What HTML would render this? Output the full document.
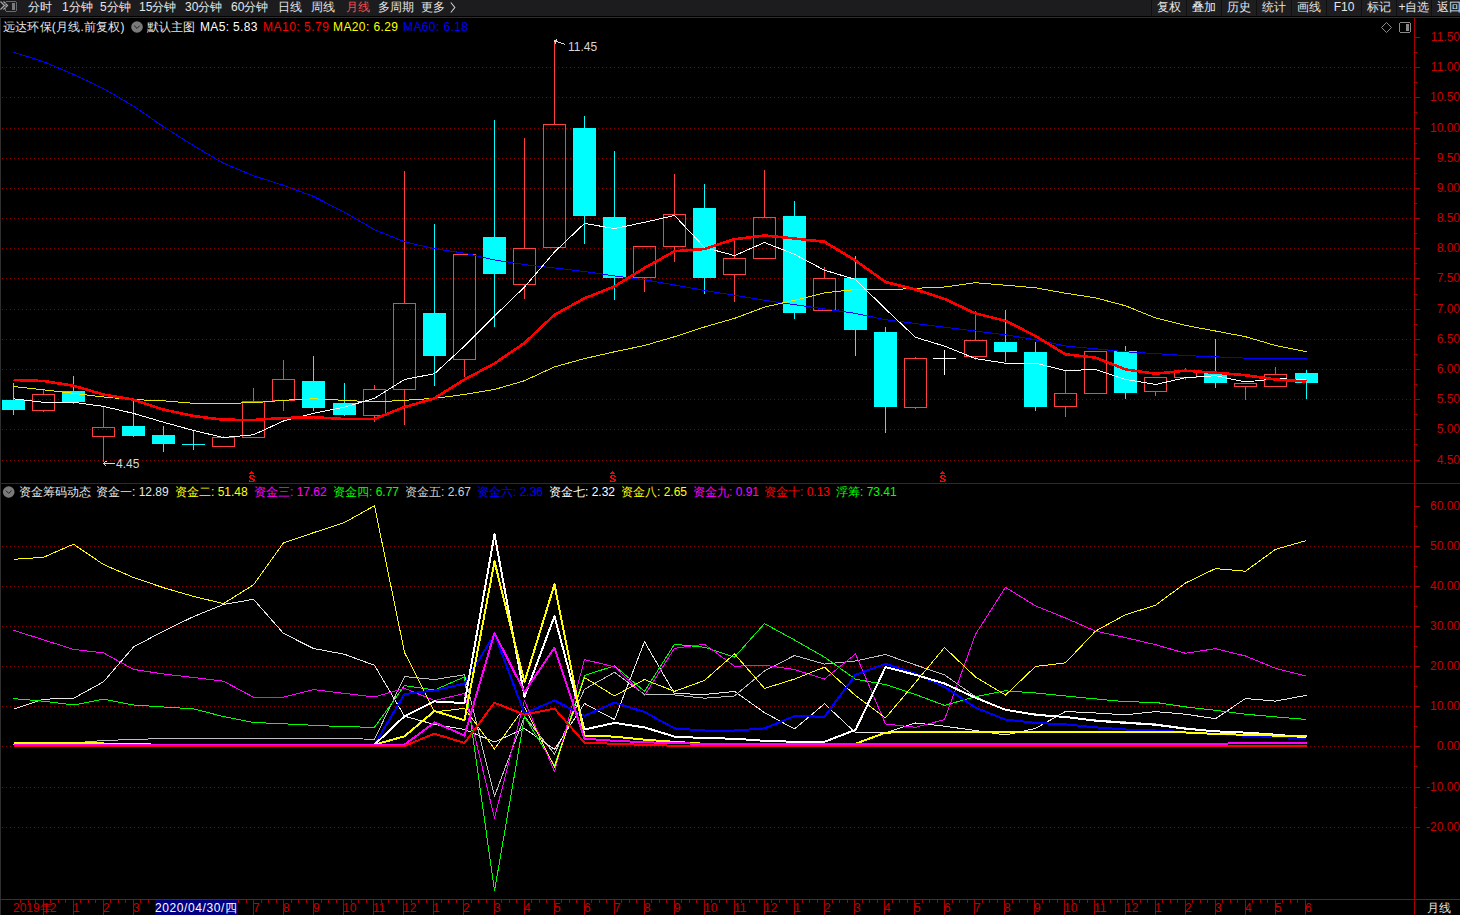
<!DOCTYPE html>
<html><head><meta charset="utf-8">
<style>
html,body{margin:0;padding:0;background:#000;width:1460px;height:915px;overflow:hidden;}
body{position:relative;font-family:"Liberation Sans",sans-serif;}
#tb{position:absolute;left:0;top:0;width:1460px;height:16px;background:#1c1c1e;}
#tl{position:absolute;left:0;top:17px;width:1460px;height:1px;background:#2e2e2e;}
#lb{position:absolute;left:0;top:17px;width:1px;height:898px;background:#2e2e2e;}
.t{position:absolute;white-space:nowrap;line-height:16px;}
.btn{position:absolute;top:0;width:34px;height:16px;background:#1e1e20;border-left:1px solid #101010;color:#e6e6e6;font-size:12px;line-height:15px;text-align:center;white-space:nowrap;}
.ra{position:absolute;right:0;width:44px;text-align:right;color:#c80000;font-size:12px;line-height:16px;}
.bl{position:absolute;top:901px;color:#c80000;font-size:12px;line-height:15px;white-space:nowrap;}
.hl{position:absolute;top:900px;left:155px;width:83px;height:15px;background:#000080;color:#fff;font-size:12px;line-height:16px;letter-spacing:0.6px;white-space:nowrap;}
svg{position:absolute;left:0;top:0;}
</style></head><body>
<div id="tb"></div>
<div class="btn" style="left:1151px">复权</div><div class="btn" style="left:1186px">叠加</div><div class="btn" style="left:1221px">历史</div><div class="btn" style="left:1256px">统计</div><div class="btn" style="left:1291px">画线</div><div class="btn" style="left:1326px">F10</div><div class="btn" style="left:1361px">标记</div><div class="btn" style="left:1396px">+自选</div><div class="btn" style="left:1431px">返回</div>
<div id="tl"></div>
<div id="lb"></div>
<svg width="1460" height="915" viewBox="0 0 1460 915" shape-rendering="crispEdges">
<line x1="2" y1="67.5" x2="1412" y2="67.5" stroke="#8a0000" stroke-width="1" stroke-dasharray="1 3"/>
<line x1="2" y1="97.5" x2="1412" y2="97.5" stroke="#8a0000" stroke-width="1" stroke-dasharray="1 3"/>
<line x1="2" y1="128.5" x2="1412" y2="128.5" stroke="#8a0000" stroke-width="1" stroke-dasharray="1 3"/>
<line x1="2" y1="158.5" x2="1412" y2="158.5" stroke="#8a0000" stroke-width="1" stroke-dasharray="1 3"/>
<line x1="2" y1="188.5" x2="1412" y2="188.5" stroke="#8a0000" stroke-width="1" stroke-dasharray="1 3"/>
<line x1="2" y1="218.5" x2="1412" y2="218.5" stroke="#8a0000" stroke-width="1" stroke-dasharray="1 3"/>
<line x1="2" y1="248.5" x2="1412" y2="248.5" stroke="#8a0000" stroke-width="1" stroke-dasharray="1 3"/>
<line x1="2" y1="278.5" x2="1412" y2="278.5" stroke="#8a0000" stroke-width="1" stroke-dasharray="1 3"/>
<line x1="2" y1="309.5" x2="1412" y2="309.5" stroke="#8a0000" stroke-width="1" stroke-dasharray="1 3"/>
<line x1="2" y1="339.5" x2="1412" y2="339.5" stroke="#8a0000" stroke-width="1" stroke-dasharray="1 3"/>
<line x1="2" y1="369.5" x2="1412" y2="369.5" stroke="#8a0000" stroke-width="1" stroke-dasharray="1 3"/>
<line x1="2" y1="399.5" x2="1412" y2="399.5" stroke="#8a0000" stroke-width="1" stroke-dasharray="1 3"/>
<line x1="2" y1="429.5" x2="1412" y2="429.5" stroke="#8a0000" stroke-width="1" stroke-dasharray="1 3"/>
<line x1="2" y1="460.5" x2="1412" y2="460.5" stroke="#8a0000" stroke-width="1" stroke-dasharray="1 3"/>
<line x1="2" y1="546.5" x2="1412" y2="546.5" stroke="#8a0000" stroke-width="1" stroke-dasharray="1 3"/>
<line x1="2" y1="586.5" x2="1412" y2="586.5" stroke="#8a0000" stroke-width="1" stroke-dasharray="1 3"/>
<line x1="2" y1="626.5" x2="1412" y2="626.5" stroke="#8a0000" stroke-width="1" stroke-dasharray="1 3"/>
<line x1="2" y1="666.5" x2="1412" y2="666.5" stroke="#8a0000" stroke-width="1" stroke-dasharray="1 3"/>
<line x1="2" y1="706.5" x2="1412" y2="706.5" stroke="#8a0000" stroke-width="1" stroke-dasharray="1 3"/>
<line x1="2" y1="746.5" x2="1412" y2="746.5" stroke="#8a0000" stroke-width="1" stroke-dasharray="1 3"/>
<line x1="2" y1="787.5" x2="1412" y2="787.5" stroke="#8a0000" stroke-width="1" stroke-dasharray="1 3"/>
<line x1="2" y1="827.5" x2="1412" y2="827.5" stroke="#8a0000" stroke-width="1" stroke-dasharray="1 3"/>
<rect x="2" y="400" width="23" height="10" fill="#00ffff"/>
<rect x="13" y="383" width="1" height="17" fill="#00ffff"/>
<rect x="13" y="410" width="1" height="5" fill="#00ffff"/>
<rect x="32.5" y="394.5" width="22" height="16" fill="none" stroke="#ff4040" stroke-width="1"/>
<rect x="43" y="389" width="1" height="5" fill="#ff4040"/>
<rect x="43" y="411" width="1" height="1" fill="#ff4040"/>
<rect x="62" y="391" width="23" height="11" fill="#00ffff"/>
<rect x="73" y="376" width="1" height="15" fill="#00ffff"/>
<rect x="73" y="402" width="1" height="2" fill="#00ffff"/>
<rect x="92.5" y="427.5" width="22" height="9" fill="none" stroke="#ff4040" stroke-width="1"/>
<rect x="103" y="407" width="1" height="20" fill="#ff4040"/>
<rect x="103" y="437" width="1" height="25" fill="#ff4040"/>
<rect x="122" y="426" width="23" height="10" fill="#00ffff"/>
<rect x="133" y="400" width="1" height="26" fill="#00ffff"/>
<rect x="133" y="436" width="1" height="1" fill="#00ffff"/>
<rect x="152" y="435" width="23" height="9" fill="#00ffff"/>
<rect x="163" y="426" width="1" height="9" fill="#00ffff"/>
<rect x="163" y="444" width="1" height="8" fill="#00ffff"/>
<rect x="182" y="444" width="23" height="1" fill="#00ffff"/>
<rect x="193" y="431" width="1" height="19" fill="#00ffff"/>
<rect x="212.5" y="437.5" width="22" height="9" fill="none" stroke="#ff4040" stroke-width="1"/>
<rect x="223" y="436" width="1" height="1" fill="#ff4040"/>
<rect x="242.5" y="401.5" width="22" height="36" fill="none" stroke="#ff4040" stroke-width="1"/>
<rect x="253" y="388" width="1" height="13" fill="#ff4040"/>
<rect x="272.5" y="379.5" width="22" height="21" fill="none" stroke="#ff4040" stroke-width="1"/>
<rect x="283" y="360" width="1" height="19" fill="#ff4040"/>
<rect x="283" y="401" width="1" height="10" fill="#ff4040"/>
<rect x="302" y="381" width="23" height="27" fill="#00ffff"/>
<rect x="313" y="356" width="1" height="25" fill="#00ffff"/>
<rect x="313" y="408" width="1" height="3" fill="#00ffff"/>
<rect x="333" y="403" width="23" height="12" fill="#00ffff"/>
<rect x="344" y="383" width="1" height="20" fill="#00ffff"/>
<rect x="344" y="415" width="1" height="1" fill="#00ffff"/>
<rect x="363.5" y="389.5" width="22" height="26" fill="none" stroke="#ff4040" stroke-width="1"/>
<rect x="374" y="385" width="1" height="4" fill="#ff4040"/>
<rect x="374" y="416" width="1" height="6" fill="#ff4040"/>
<rect x="393.5" y="303.5" width="22" height="86" fill="none" stroke="#ff4040" stroke-width="1"/>
<rect x="404" y="171" width="1" height="132" fill="#ff4040"/>
<rect x="404" y="390" width="1" height="35" fill="#ff4040"/>
<rect x="423" y="313" width="23" height="43" fill="#00ffff"/>
<rect x="434" y="224" width="1" height="89" fill="#00ffff"/>
<rect x="434" y="356" width="1" height="30" fill="#00ffff"/>
<rect x="453.5" y="254.5" width="22" height="105" fill="none" stroke="#ff4040" stroke-width="1"/>
<rect x="464" y="360" width="1" height="17" fill="#ff4040"/>
<rect x="483" y="237" width="23" height="37" fill="#00ffff"/>
<rect x="494" y="120" width="1" height="117" fill="#00ffff"/>
<rect x="494" y="274" width="1" height="53" fill="#00ffff"/>
<rect x="513.5" y="248.5" width="22" height="36" fill="none" stroke="#ff4040" stroke-width="1"/>
<rect x="524" y="138" width="1" height="110" fill="#ff4040"/>
<rect x="524" y="285" width="1" height="14" fill="#ff4040"/>
<rect x="543.5" y="124.5" width="22" height="123" fill="none" stroke="#ff4040" stroke-width="1"/>
<rect x="554" y="41" width="1" height="83" fill="#ff4040"/>
<rect x="573" y="128" width="23" height="88" fill="#00ffff"/>
<rect x="584" y="116" width="1" height="12" fill="#00ffff"/>
<rect x="584" y="216" width="1" height="28" fill="#00ffff"/>
<rect x="603" y="217" width="23" height="61" fill="#00ffff"/>
<rect x="614" y="151" width="1" height="66" fill="#00ffff"/>
<rect x="614" y="278" width="1" height="22" fill="#00ffff"/>
<rect x="633.5" y="246.5" width="22" height="31" fill="none" stroke="#ff4040" stroke-width="1"/>
<rect x="644" y="278" width="1" height="14" fill="#ff4040"/>
<rect x="663.5" y="214.5" width="22" height="32" fill="none" stroke="#ff4040" stroke-width="1"/>
<rect x="674" y="174" width="1" height="40" fill="#ff4040"/>
<rect x="674" y="247" width="1" height="15" fill="#ff4040"/>
<rect x="693" y="208" width="23" height="70" fill="#00ffff"/>
<rect x="704" y="184" width="1" height="24" fill="#00ffff"/>
<rect x="704" y="278" width="1" height="16" fill="#00ffff"/>
<rect x="723.5" y="258.5" width="22" height="16" fill="none" stroke="#ff4040" stroke-width="1"/>
<rect x="734" y="240" width="1" height="18" fill="#ff4040"/>
<rect x="734" y="275" width="1" height="27" fill="#ff4040"/>
<rect x="753.5" y="217.5" width="22" height="41" fill="none" stroke="#ff4040" stroke-width="1"/>
<rect x="764" y="170" width="1" height="47" fill="#ff4040"/>
<rect x="783" y="216" width="23" height="97" fill="#00ffff"/>
<rect x="794" y="201" width="1" height="15" fill="#00ffff"/>
<rect x="794" y="313" width="1" height="6" fill="#00ffff"/>
<rect x="813.5" y="278.5" width="22" height="32" fill="none" stroke="#ff4040" stroke-width="1"/>
<rect x="824" y="267" width="1" height="11" fill="#ff4040"/>
<rect x="844" y="278" width="23" height="52" fill="#00ffff"/>
<rect x="855" y="256" width="1" height="22" fill="#00ffff"/>
<rect x="855" y="330" width="1" height="26" fill="#00ffff"/>
<rect x="874" y="332" width="23" height="75" fill="#00ffff"/>
<rect x="885" y="327" width="1" height="5" fill="#00ffff"/>
<rect x="885" y="407" width="1" height="26" fill="#00ffff"/>
<rect x="904.5" y="358.5" width="22" height="49" fill="none" stroke="#ff4040" stroke-width="1"/>
<rect x="915" y="357" width="1" height="1" fill="#ff4040"/>
<rect x="915" y="408" width="1" height="1" fill="#ff4040"/>
<rect x="933" y="358" width="23" height="1" fill="#ffffff"/>
<rect x="944" y="350" width="1" height="25" fill="#ffffff"/>
<rect x="964.5" y="340.5" width="22" height="16" fill="none" stroke="#ff4040" stroke-width="1"/>
<rect x="975" y="311" width="1" height="29" fill="#ff4040"/>
<rect x="975" y="357" width="1" height="3" fill="#ff4040"/>
<rect x="994" y="342" width="23" height="10" fill="#00ffff"/>
<rect x="1005" y="310" width="1" height="32" fill="#00ffff"/>
<rect x="1005" y="352" width="1" height="10" fill="#00ffff"/>
<rect x="1024" y="352" width="23" height="55" fill="#00ffff"/>
<rect x="1035" y="342" width="1" height="10" fill="#00ffff"/>
<rect x="1035" y="407" width="1" height="4" fill="#00ffff"/>
<rect x="1054.5" y="393.5" width="22" height="13" fill="none" stroke="#ff4040" stroke-width="1"/>
<rect x="1065" y="370" width="1" height="23" fill="#ff4040"/>
<rect x="1065" y="407" width="1" height="10" fill="#ff4040"/>
<rect x="1084.5" y="351.5" width="22" height="42" fill="none" stroke="#ff4040" stroke-width="1"/>
<rect x="1114" y="351" width="23" height="42" fill="#00ffff"/>
<rect x="1125" y="346" width="1" height="5" fill="#00ffff"/>
<rect x="1125" y="393" width="1" height="6" fill="#00ffff"/>
<rect x="1144.5" y="377.5" width="22" height="14" fill="none" stroke="#ff4040" stroke-width="1"/>
<rect x="1155" y="392" width="1" height="4" fill="#ff4040"/>
<rect x="1174.5" y="371.5" width="22" height="6" fill="none" stroke="#ff4040" stroke-width="1"/>
<rect x="1185" y="368" width="1" height="3" fill="#ff4040"/>
<rect x="1185" y="378" width="1" height="2" fill="#ff4040"/>
<rect x="1204" y="372" width="23" height="11" fill="#00ffff"/>
<rect x="1215" y="339" width="1" height="33" fill="#00ffff"/>
<rect x="1215" y="383" width="1" height="5" fill="#00ffff"/>
<rect x="1234.5" y="383.5" width="22" height="3" fill="none" stroke="#ff4040" stroke-width="1"/>
<rect x="1245" y="387" width="1" height="13" fill="#ff4040"/>
<rect x="1264.5" y="374.5" width="22" height="12" fill="none" stroke="#ff4040" stroke-width="1"/>
<rect x="1275" y="367" width="1" height="7" fill="#ff4040"/>
<rect x="1295" y="373" width="23" height="10" fill="#00ffff"/>
<rect x="1306" y="370" width="1" height="3" fill="#00ffff"/>
<rect x="1306" y="383" width="1" height="16" fill="#00ffff"/>
<polyline points="13.5,52.2 43.5,61.7 73.5,74.4 103.5,88.6 133.5,106.1 163.5,126.7 193.5,145.7 223.5,163.2 253.5,175.8 283.5,185.3 313.5,196.4 344.5,212.3 374.5,229.7 404.5,241.8 434.5,248.7 464.5,253.2 494.5,260.0 524.5,264.6 554.5,267.9 584.5,271.5 614.5,275.9 644.5,279.8 674.5,285.0 704.5,290.4 734.5,295.3 764.5,300.3 794.5,304.6 824.5,308.9 855.5,313.4 885.5,319.7 915.5,323.5 944.5,327.2 975.5,331.0 1005.5,334.8 1035.5,339.8 1065.5,346.0 1095.5,348.8 1125.5,351.8 1155.5,353.6 1185.5,355.6 1215.5,356.8 1245.5,358.1 1275.5,358.6 1306.5,358.6" fill="none" stroke="#0000ff" stroke-width="1" stroke-linejoin="round" />
<polyline points="13.5,386.5 43.5,389.8 73.5,393.3 103.5,397.0 133.5,399.6 163.5,400.8 193.5,403.3 223.5,403.3 253.5,402.8 283.5,400.3 313.5,398.8 344.5,400.3 374.5,402.0 404.5,400.3 434.5,398.3 464.5,394.5 494.5,389.5 524.5,380.7 554.5,366.9 584.5,358.6 614.5,351.8 644.5,345.5 674.5,336.7 704.5,327.0 734.5,318.4 764.5,307.1 794.5,300.3 824.5,292.8 855.5,289.5 885.5,290.0 915.5,288.3 944.5,287.0 975.5,282.7 1005.5,285.2 1035.5,287.8 1065.5,293.2 1095.5,297.8 1125.5,305.8 1155.5,317.9 1185.5,325.4 1215.5,331.0 1245.5,336.7 1275.5,345.5 1306.5,351.8" fill="none" stroke="#e8e800" stroke-width="1" stroke-linejoin="round" />
<polyline points="13.5,398.8 43.5,402.3 73.5,402.3 103.5,406.4 133.5,413.4 163.5,422.2 193.5,430.5 223.5,437.5 253.5,434.8 283.5,421.0 313.5,413.4 344.5,407.1 374.5,398.3 404.5,379.5 434.5,373.7 464.5,346.0 494.5,316.0 524.5,287.0 554.5,252.0 584.5,223.4 614.5,228.6 644.5,222.3 674.5,215.5 704.5,247.5 734.5,255.6 764.5,242.5 794.5,254.3 824.5,270.2 855.5,279.5 885.5,309.0 915.5,337.3 944.5,346.1 975.5,358.6 1005.5,363.2 1035.5,363.2 1065.5,370.7 1095.5,369.4 1125.5,379.5 1155.5,384.5 1185.5,377.7 1215.5,375.7 1245.5,382.0 1275.5,378.7 1306.5,379.5" fill="none" stroke="#ffffff" stroke-width="1" stroke-linejoin="round" />
<polyline points="13.5,380.0 43.5,381.0 73.5,385.7 103.5,394.5 133.5,399.6 163.5,409.6 193.5,416.0 223.5,419.7 253.5,420.0 283.5,418.0 313.5,417.2 344.5,419.0 374.5,419.0 404.5,407.1 434.5,398.3 464.5,379.5 494.5,363.5 524.5,343.0 554.5,314.8 584.5,298.3 614.5,286.4 644.5,268.0 674.5,251.2 704.5,249.0 734.5,239.2 764.5,235.5 794.5,238.5 824.5,241.8 855.5,260.6 885.5,282.0 915.5,289.5 944.5,299.0 975.5,313.4 1005.5,320.9 1035.5,336.0 1065.5,354.3 1095.5,357.6 1125.5,369.4 1155.5,373.7 1185.5,370.7 1215.5,372.7 1245.5,375.2 1275.5,379.5 1306.5,381.5" fill="none" stroke="#ff0000" stroke-width="2.6" stroke-linejoin="round" />
<polyline points="13.5,745.0 43.5,744.0 73.5,743.0 103.5,740.5 133.5,739.5 163.5,738.5 193.5,738.5 223.5,738.5 253.5,738.5 283.5,738.5 313.5,738.5 344.5,738.5 374.5,739.3 404.5,676.6 434.5,679.5 464.5,674.8 494.5,796.2 524.5,716.5 554.5,754.0 584.5,689.3 614.5,672.3 644.5,694.5 674.5,695.0 704.5,698.2 734.5,696.0 764.5,670.9 794.5,655.5 824.5,664.1 855.5,661.0 885.5,654.5 915.5,665.0 944.5,674.8 975.5,696.7 1005.5,709.8 1035.5,714.0 1065.5,717.0 1095.5,720.0 1125.5,722.0 1155.5,724.0 1185.5,728.0 1215.5,731.0 1245.5,732.6 1275.5,734.7 1306.5,736.0" fill="none" stroke="#c0c0c0" stroke-width="1" stroke-linejoin="round" />
<polyline points="13.5,709.3 43.5,699.2 73.5,698.3 103.5,681.8 133.5,647.0 163.5,631.1 193.5,616.6 223.5,604.5 253.5,599.3 283.5,633.4 313.5,648.5 344.5,654.3 374.5,665.3 404.5,716.2 434.5,724.5 464.5,729.4 494.5,742.0 524.5,728.5 554.5,749.4 584.5,703.5 614.5,719.6 644.5,641.7 674.5,693.5 704.5,694.5 734.5,691.4 764.5,712.6 794.5,729.0 824.5,703.8 855.5,732.7 885.5,732.7 915.5,723.0 944.5,726.2 975.5,730.5 1005.5,735.0 1035.5,728.4 1065.5,711.5 1095.5,713.0 1125.5,714.8 1155.5,711.6 1185.5,714.2 1215.5,718.7 1245.5,698.5 1275.5,701.1 1306.5,695.3" fill="none" stroke="#e8e8e8" stroke-width="1" stroke-linejoin="round" />
<polyline points="13.5,698.6 43.5,701.2 73.5,705.0 103.5,699.2 133.5,705.0 163.5,707.0 193.5,708.8 223.5,716.6 253.5,722.4 283.5,723.8 313.5,725.3 344.5,726.7 374.5,727.3 404.5,685.6 434.5,690.0 464.5,676.9 494.5,890.9 524.5,716.5 554.5,765.5 584.5,675.5 614.5,665.8 644.5,691.4 674.5,644.2 704.5,647.3 734.5,657.1 764.5,623.6 794.5,640.0 824.5,657.1 855.5,679.2 885.5,684.6 915.5,694.5 944.5,705.4 975.5,696.7 1005.5,690.8 1035.5,693.0 1065.5,696.0 1095.5,698.9 1125.5,701.7 1155.5,702.4 1185.5,706.9 1215.5,710.3 1245.5,714.2 1275.5,716.9 1306.5,719.5" fill="none" stroke="#00ff00" stroke-width="1" stroke-linejoin="round" />
<polyline points="13.5,630.3 43.5,639.8 73.5,649.4 103.5,652.9 133.5,669.4 163.5,674.0 193.5,677.5 223.5,681.2 253.5,697.2 283.5,697.2 313.5,689.6 344.5,693.4 374.5,697.0 404.5,688.3 434.5,700.5 464.5,693.5 494.5,818.2 524.5,700.5 554.5,771.6 584.5,659.6 614.5,666.8 644.5,695.5 674.5,648.3 704.5,644.2 734.5,666.2 764.5,665.3 794.5,669.5 824.5,679.1 855.5,654.0 885.5,724.0 915.5,727.3 944.5,719.6 975.5,634.3 1005.5,587.3 1035.5,605.9 1065.5,618.0 1095.5,631.1 1125.5,637.6 1155.5,644.7 1185.5,653.3 1215.5,648.6 1245.5,656.0 1275.5,668.3 1306.5,676.2" fill="none" stroke="#ff00ff" stroke-width="1" stroke-linejoin="round" />
<polyline points="13.5,559.3 43.5,557.3 73.5,544.2 103.5,564.5 133.5,577.5 163.5,587.7 193.5,596.4 223.5,603.6 253.5,584.8 283.5,542.8 313.5,532.7 344.5,522.5 374.5,505.7 404.5,652.4 434.5,711.9 464.5,708.4 494.5,749.0 524.5,707.3 554.5,767.0 584.5,677.5 614.5,696.0 644.5,679.5 674.5,691.4 704.5,680.5 734.5,653.8 764.5,688.4 794.5,679.1 824.5,667.2 855.5,695.6 885.5,717.9 915.5,682.4 944.5,647.5 975.5,677.0 1005.5,695.1 1035.5,666.5 1065.5,662.8 1095.5,631.1 1125.5,614.7 1155.5,605.3 1185.5,583.0 1215.5,568.6 1245.5,571.2 1275.5,549.4 1306.5,540.5" fill="none" stroke="#ffff00" stroke-width="1" stroke-linejoin="round" />
<polyline points="13.5,745.5 43.5,745.5 73.5,745.5 103.5,745.5 133.5,745.5 163.5,745.5 193.5,745.5 223.5,745.5 253.5,745.5 283.5,745.5 313.5,745.5 344.5,745.5 374.5,744.7 404.5,694.0 434.5,690.5 464.5,683.6 494.5,634.1 524.5,713.5 554.5,700.5 584.5,715.8 614.5,702.7 644.5,712.0 674.5,728.4 704.5,730.5 734.5,730.5 764.5,728.4 794.5,716.1 824.5,716.7 855.5,674.8 885.5,663.9 915.5,673.7 944.5,686.8 975.5,707.6 1005.5,719.6 1035.5,722.9 1065.5,724.4 1095.5,727.3 1125.5,729.5 1155.5,730.5 1185.5,732.1 1215.5,733.9 1245.5,735.7 1275.5,737.3 1306.5,737.8" fill="none" stroke="#0000ff" stroke-width="2" stroke-linejoin="round" />
<polyline points="13.5,745.5 43.5,745.5 73.5,745.5 103.5,745.5 133.5,745.5 163.5,745.5 193.5,745.5 223.5,745.5 253.5,745.5 283.5,745.5 313.5,745.5 344.5,745.5 374.5,744.7 404.5,716.2 434.5,701.4 464.5,703.1 494.5,534.5 524.5,696.6 554.5,616.3 584.5,729.5 614.5,722.9 644.5,727.4 674.5,736.6 704.5,738.1 734.5,738.7 764.5,740.8 794.5,741.8 824.5,741.8 855.5,729.9 885.5,667.1 915.5,674.8 944.5,683.5 975.5,697.8 1005.5,709.8 1035.5,714.8 1065.5,717.0 1095.5,720.7 1125.5,722.9 1155.5,724.7 1185.5,728.7 1215.5,731.3 1245.5,732.6 1275.5,734.7 1306.5,737.3" fill="none" stroke="#ffffff" stroke-width="2" stroke-linejoin="round" />
<polyline points="13.5,743.0 43.5,743.0 73.5,743.0 103.5,743.5 133.5,743.8 163.5,745.0 193.5,745.0 223.5,745.0 253.5,745.0 283.5,745.0 313.5,745.0 344.5,745.0 374.5,744.7 404.5,736.3 434.5,711.0 464.5,720.3 494.5,561.5 524.5,682.1 554.5,584.4 584.5,735.7 614.5,736.6 644.5,739.7 674.5,741.8 704.5,743.8 734.5,743.8 764.5,743.8 794.5,743.8 824.5,743.8 855.5,743.7 885.5,732.7 915.5,731.6 944.5,731.6 975.5,731.6 1005.5,731.6 1035.5,731.6 1065.5,731.6 1095.5,731.6 1125.5,731.6 1155.5,731.6 1185.5,732.5 1215.5,733.9 1245.5,734.8 1275.5,735.6 1306.5,736.5" fill="none" stroke="#ffff00" stroke-width="2" stroke-linejoin="round" />
<polyline points="13.5,744.7 43.5,744.7 73.5,744.7 103.5,744.7 133.5,744.7 163.5,744.7 193.5,744.7 223.5,744.7 253.5,744.7 283.5,744.7 313.5,744.7 344.5,744.7 374.5,744.7 404.5,744.7 434.5,722.4 464.5,735.5 494.5,633.0 524.5,692.0 554.5,647.7 584.5,738.7 614.5,740.8 644.5,742.2 674.5,743.2 704.5,743.8 734.5,744.2 764.5,744.2 794.5,744.2 824.5,744.2 855.5,744.2 885.5,744.2 915.5,744.2 944.5,744.2 975.5,744.2 1005.5,744.2 1035.5,744.2 1065.5,744.2 1095.5,744.2 1125.5,744.2 1155.5,744.2 1185.5,744.2 1215.5,744.2 1245.5,742.6 1275.5,742.6 1306.5,742.6" fill="none" stroke="#ff00ff" stroke-width="2" stroke-linejoin="round" />
<polyline points="13.5,745.9 43.5,745.9 73.5,745.9 103.5,745.9 133.5,745.9 163.5,745.9 193.5,745.9 223.5,745.9 253.5,745.9 283.5,745.9 313.5,745.9 344.5,745.9 374.5,745.9 404.5,745.9 434.5,733.7 464.5,743.0 494.5,702.8 524.5,714.7 554.5,708.6 584.5,742.6 614.5,743.8 644.5,744.9 674.5,745.7 704.5,745.7 734.5,745.7 764.5,745.7 794.5,745.7 824.5,745.7 855.5,745.7 885.5,745.7 915.5,745.7 944.5,745.7 975.5,745.7 1005.5,745.7 1035.5,745.7 1065.5,745.7 1095.5,745.7 1125.5,745.7 1155.5,745.7 1185.5,745.7 1215.5,745.7 1245.5,745.7 1275.5,745.7 1306.5,745.7" fill="none" stroke="#ff0000" stroke-width="2" stroke-linejoin="round" />
<rect x="0" y="483" width="1460" height="1" fill="#900000"/>
<rect x="0" y="899" width="1460" height="1" fill="#b00000"/>
<rect x="1414" y="18" width="1.2" height="897" fill="#a80000"/>
<rect x="1414" y="37" width="6" height="1" fill="#a80000"/>
<rect x="1414" y="52" width="3" height="1" fill="#a80000"/>
<rect x="1414" y="67" width="6" height="1" fill="#a80000"/>
<rect x="1414" y="82" width="3" height="1" fill="#a80000"/>
<rect x="1414" y="97" width="6" height="1" fill="#a80000"/>
<rect x="1414" y="112" width="3" height="1" fill="#a80000"/>
<rect x="1414" y="128" width="6" height="1" fill="#a80000"/>
<rect x="1414" y="143" width="3" height="1" fill="#a80000"/>
<rect x="1414" y="158" width="6" height="1" fill="#a80000"/>
<rect x="1414" y="173" width="3" height="1" fill="#a80000"/>
<rect x="1414" y="188" width="6" height="1" fill="#a80000"/>
<rect x="1414" y="203" width="3" height="1" fill="#a80000"/>
<rect x="1414" y="218" width="6" height="1" fill="#a80000"/>
<rect x="1414" y="233" width="3" height="1" fill="#a80000"/>
<rect x="1414" y="248" width="6" height="1" fill="#a80000"/>
<rect x="1414" y="263" width="3" height="1" fill="#a80000"/>
<rect x="1414" y="278" width="6" height="1" fill="#a80000"/>
<rect x="1414" y="294" width="3" height="1" fill="#a80000"/>
<rect x="1414" y="309" width="6" height="1" fill="#a80000"/>
<rect x="1414" y="324" width="3" height="1" fill="#a80000"/>
<rect x="1414" y="339" width="6" height="1" fill="#a80000"/>
<rect x="1414" y="354" width="3" height="1" fill="#a80000"/>
<rect x="1414" y="369" width="6" height="1" fill="#a80000"/>
<rect x="1414" y="384" width="3" height="1" fill="#a80000"/>
<rect x="1414" y="399" width="6" height="1" fill="#a80000"/>
<rect x="1414" y="414" width="3" height="1" fill="#a80000"/>
<rect x="1414" y="429" width="6" height="1" fill="#a80000"/>
<rect x="1414" y="444" width="3" height="1" fill="#a80000"/>
<rect x="1414" y="460" width="6" height="1" fill="#a80000"/>
<rect x="1414" y="506" width="6" height="1" fill="#a80000"/>
<rect x="1414" y="526" width="3" height="1" fill="#a80000"/>
<rect x="1414" y="546" width="6" height="1" fill="#a80000"/>
<rect x="1414" y="566" width="3" height="1" fill="#a80000"/>
<rect x="1414" y="586" width="6" height="1" fill="#a80000"/>
<rect x="1414" y="606" width="3" height="1" fill="#a80000"/>
<rect x="1414" y="626" width="6" height="1" fill="#a80000"/>
<rect x="1414" y="646" width="3" height="1" fill="#a80000"/>
<rect x="1414" y="666" width="6" height="1" fill="#a80000"/>
<rect x="1414" y="686" width="3" height="1" fill="#a80000"/>
<rect x="1414" y="706" width="6" height="1" fill="#a80000"/>
<rect x="1414" y="726" width="3" height="1" fill="#a80000"/>
<rect x="1414" y="746" width="6" height="1" fill="#a80000"/>
<rect x="1414" y="766" width="3" height="1" fill="#a80000"/>
<rect x="1414" y="787" width="6" height="1" fill="#a80000"/>
<rect x="1414" y="807" width="3" height="1" fill="#a80000"/>
<rect x="1414" y="827" width="6" height="1" fill="#a80000"/>
<rect x="43" y="900" width="1" height="15" fill="#a80000"/>
<rect x="73" y="900" width="1" height="15" fill="#a80000"/>
<rect x="103" y="900" width="1" height="15" fill="#a80000"/>
<rect x="133" y="900" width="1" height="15" fill="#a80000"/>
<rect x="163" y="900" width="1" height="15" fill="#a80000"/>
<rect x="193" y="900" width="1" height="15" fill="#a80000"/>
<rect x="223" y="900" width="1" height="15" fill="#a80000"/>
<rect x="253" y="900" width="1" height="15" fill="#a80000"/>
<rect x="283" y="900" width="1" height="15" fill="#a80000"/>
<rect x="313" y="900" width="1" height="15" fill="#a80000"/>
<rect x="343" y="900" width="1" height="15" fill="#a80000"/>
<rect x="373" y="900" width="1" height="15" fill="#a80000"/>
<rect x="403" y="900" width="1" height="15" fill="#a80000"/>
<rect x="433" y="900" width="1" height="15" fill="#a80000"/>
<rect x="463" y="900" width="1" height="15" fill="#a80000"/>
<rect x="494" y="900" width="1" height="15" fill="#a80000"/>
<rect x="524" y="900" width="1" height="15" fill="#a80000"/>
<rect x="554" y="900" width="1" height="15" fill="#a80000"/>
<rect x="584" y="900" width="1" height="15" fill="#a80000"/>
<rect x="614" y="900" width="1" height="15" fill="#a80000"/>
<rect x="644" y="900" width="1" height="15" fill="#a80000"/>
<rect x="674" y="900" width="1" height="15" fill="#a80000"/>
<rect x="704" y="900" width="1" height="15" fill="#a80000"/>
<rect x="734" y="900" width="1" height="15" fill="#a80000"/>
<rect x="764" y="900" width="1" height="15" fill="#a80000"/>
<rect x="794" y="900" width="1" height="15" fill="#a80000"/>
<rect x="824" y="900" width="1" height="15" fill="#a80000"/>
<rect x="854" y="900" width="1" height="15" fill="#a80000"/>
<rect x="884" y="900" width="1" height="15" fill="#a80000"/>
<rect x="914" y="900" width="1" height="15" fill="#a80000"/>
<rect x="944" y="900" width="1" height="15" fill="#a80000"/>
<rect x="974" y="900" width="1" height="15" fill="#a80000"/>
<rect x="1004" y="900" width="1" height="15" fill="#a80000"/>
<rect x="1034" y="900" width="1" height="15" fill="#a80000"/>
<rect x="1064" y="900" width="1" height="15" fill="#a80000"/>
<rect x="1094" y="900" width="1" height="15" fill="#a80000"/>
<rect x="1125" y="900" width="1" height="15" fill="#a80000"/>
<rect x="1155" y="900" width="1" height="15" fill="#a80000"/>
<rect x="1185" y="900" width="1" height="15" fill="#a80000"/>
<rect x="1215" y="900" width="1" height="15" fill="#a80000"/>
<rect x="1245" y="900" width="1" height="15" fill="#a80000"/>
<rect x="1275" y="900" width="1" height="15" fill="#a80000"/>
<rect x="1305" y="900" width="1" height="15" fill="#a80000"/>
<rect x="20" y="900" width="1" height="3" fill="#a80000"/>
<rect x="28" y="900" width="1" height="3" fill="#a80000"/>
<rect x="35" y="900" width="1" height="3" fill="#a80000"/>
<rect x="50" y="900" width="1" height="3" fill="#a80000"/>
<rect x="58" y="900" width="1" height="3" fill="#a80000"/>
<rect x="65" y="900" width="1" height="3" fill="#a80000"/>
<rect x="80" y="900" width="1" height="3" fill="#a80000"/>
<rect x="88" y="900" width="1" height="3" fill="#a80000"/>
<rect x="95" y="900" width="1" height="3" fill="#a80000"/>
<rect x="110" y="900" width="1" height="3" fill="#a80000"/>
<rect x="118" y="900" width="1" height="3" fill="#a80000"/>
<rect x="125" y="900" width="1" height="3" fill="#a80000"/>
<rect x="140" y="900" width="1" height="3" fill="#a80000"/>
<rect x="148" y="900" width="1" height="3" fill="#a80000"/>
<rect x="155" y="900" width="1" height="3" fill="#a80000"/>
<rect x="170" y="900" width="1" height="3" fill="#a80000"/>
<rect x="178" y="900" width="1" height="3" fill="#a80000"/>
<rect x="185" y="900" width="1" height="3" fill="#a80000"/>
<rect x="201" y="900" width="1" height="3" fill="#a80000"/>
<rect x="208" y="900" width="1" height="3" fill="#a80000"/>
<rect x="216" y="900" width="1" height="3" fill="#a80000"/>
<rect x="231" y="900" width="1" height="3" fill="#a80000"/>
<rect x="238" y="900" width="1" height="3" fill="#a80000"/>
<rect x="246" y="900" width="1" height="3" fill="#a80000"/>
<rect x="261" y="900" width="1" height="3" fill="#a80000"/>
<rect x="268" y="900" width="1" height="3" fill="#a80000"/>
<rect x="276" y="900" width="1" height="3" fill="#a80000"/>
<rect x="291" y="900" width="1" height="3" fill="#a80000"/>
<rect x="298" y="900" width="1" height="3" fill="#a80000"/>
<rect x="306" y="900" width="1" height="3" fill="#a80000"/>
<rect x="321" y="900" width="1" height="3" fill="#a80000"/>
<rect x="328" y="900" width="1" height="3" fill="#a80000"/>
<rect x="336" y="900" width="1" height="3" fill="#a80000"/>
<rect x="351" y="900" width="1" height="3" fill="#a80000"/>
<rect x="358" y="900" width="1" height="3" fill="#a80000"/>
<rect x="366" y="900" width="1" height="3" fill="#a80000"/>
<rect x="381" y="900" width="1" height="3" fill="#a80000"/>
<rect x="388" y="900" width="1" height="3" fill="#a80000"/>
<rect x="396" y="900" width="1" height="3" fill="#a80000"/>
<rect x="411" y="900" width="1" height="3" fill="#a80000"/>
<rect x="418" y="900" width="1" height="3" fill="#a80000"/>
<rect x="426" y="900" width="1" height="3" fill="#a80000"/>
<rect x="441" y="900" width="1" height="3" fill="#a80000"/>
<rect x="448" y="900" width="1" height="3" fill="#a80000"/>
<rect x="456" y="900" width="1" height="3" fill="#a80000"/>
<rect x="471" y="900" width="1" height="3" fill="#a80000"/>
<rect x="478" y="900" width="1" height="3" fill="#a80000"/>
<rect x="486" y="900" width="1" height="3" fill="#a80000"/>
<rect x="501" y="900" width="1" height="3" fill="#a80000"/>
<rect x="509" y="900" width="1" height="3" fill="#a80000"/>
<rect x="516" y="900" width="1" height="3" fill="#a80000"/>
<rect x="531" y="900" width="1" height="3" fill="#a80000"/>
<rect x="539" y="900" width="1" height="3" fill="#a80000"/>
<rect x="546" y="900" width="1" height="3" fill="#a80000"/>
<rect x="561" y="900" width="1" height="3" fill="#a80000"/>
<rect x="569" y="900" width="1" height="3" fill="#a80000"/>
<rect x="576" y="900" width="1" height="3" fill="#a80000"/>
<rect x="591" y="900" width="1" height="3" fill="#a80000"/>
<rect x="599" y="900" width="1" height="3" fill="#a80000"/>
<rect x="606" y="900" width="1" height="3" fill="#a80000"/>
<rect x="621" y="900" width="1" height="3" fill="#a80000"/>
<rect x="629" y="900" width="1" height="3" fill="#a80000"/>
<rect x="636" y="900" width="1" height="3" fill="#a80000"/>
<rect x="651" y="900" width="1" height="3" fill="#a80000"/>
<rect x="659" y="900" width="1" height="3" fill="#a80000"/>
<rect x="666" y="900" width="1" height="3" fill="#a80000"/>
<rect x="681" y="900" width="1" height="3" fill="#a80000"/>
<rect x="689" y="900" width="1" height="3" fill="#a80000"/>
<rect x="696" y="900" width="1" height="3" fill="#a80000"/>
<rect x="711" y="900" width="1" height="3" fill="#a80000"/>
<rect x="719" y="900" width="1" height="3" fill="#a80000"/>
<rect x="726" y="900" width="1" height="3" fill="#a80000"/>
<rect x="741" y="900" width="1" height="3" fill="#a80000"/>
<rect x="749" y="900" width="1" height="3" fill="#a80000"/>
<rect x="756" y="900" width="1" height="3" fill="#a80000"/>
<rect x="771" y="900" width="1" height="3" fill="#a80000"/>
<rect x="779" y="900" width="1" height="3" fill="#a80000"/>
<rect x="786" y="900" width="1" height="3" fill="#a80000"/>
<rect x="802" y="900" width="1" height="3" fill="#a80000"/>
<rect x="809" y="900" width="1" height="3" fill="#a80000"/>
<rect x="817" y="900" width="1" height="3" fill="#a80000"/>
<rect x="832" y="900" width="1" height="3" fill="#a80000"/>
<rect x="839" y="900" width="1" height="3" fill="#a80000"/>
<rect x="847" y="900" width="1" height="3" fill="#a80000"/>
<rect x="862" y="900" width="1" height="3" fill="#a80000"/>
<rect x="869" y="900" width="1" height="3" fill="#a80000"/>
<rect x="877" y="900" width="1" height="3" fill="#a80000"/>
<rect x="892" y="900" width="1" height="3" fill="#a80000"/>
<rect x="899" y="900" width="1" height="3" fill="#a80000"/>
<rect x="907" y="900" width="1" height="3" fill="#a80000"/>
<rect x="922" y="900" width="1" height="3" fill="#a80000"/>
<rect x="929" y="900" width="1" height="3" fill="#a80000"/>
<rect x="937" y="900" width="1" height="3" fill="#a80000"/>
<rect x="952" y="900" width="1" height="3" fill="#a80000"/>
<rect x="959" y="900" width="1" height="3" fill="#a80000"/>
<rect x="967" y="900" width="1" height="3" fill="#a80000"/>
<rect x="982" y="900" width="1" height="3" fill="#a80000"/>
<rect x="989" y="900" width="1" height="3" fill="#a80000"/>
<rect x="997" y="900" width="1" height="3" fill="#a80000"/>
<rect x="1012" y="900" width="1" height="3" fill="#a80000"/>
<rect x="1019" y="900" width="1" height="3" fill="#a80000"/>
<rect x="1027" y="900" width="1" height="3" fill="#a80000"/>
<rect x="1042" y="900" width="1" height="3" fill="#a80000"/>
<rect x="1049" y="900" width="1" height="3" fill="#a80000"/>
<rect x="1057" y="900" width="1" height="3" fill="#a80000"/>
<rect x="1072" y="900" width="1" height="3" fill="#a80000"/>
<rect x="1079" y="900" width="1" height="3" fill="#a80000"/>
<rect x="1087" y="900" width="1" height="3" fill="#a80000"/>
<rect x="1102" y="900" width="1" height="3" fill="#a80000"/>
<rect x="1110" y="900" width="1" height="3" fill="#a80000"/>
<rect x="1117" y="900" width="1" height="3" fill="#a80000"/>
<rect x="1132" y="900" width="1" height="3" fill="#a80000"/>
<rect x="1140" y="900" width="1" height="3" fill="#a80000"/>
<rect x="1147" y="900" width="1" height="3" fill="#a80000"/>
<rect x="1162" y="900" width="1" height="3" fill="#a80000"/>
<rect x="1170" y="900" width="1" height="3" fill="#a80000"/>
<rect x="1177" y="900" width="1" height="3" fill="#a80000"/>
<rect x="1192" y="900" width="1" height="3" fill="#a80000"/>
<rect x="1200" y="900" width="1" height="3" fill="#a80000"/>
<rect x="1207" y="900" width="1" height="3" fill="#a80000"/>
<rect x="1222" y="900" width="1" height="3" fill="#a80000"/>
<rect x="1230" y="900" width="1" height="3" fill="#a80000"/>
<rect x="1237" y="900" width="1" height="3" fill="#a80000"/>
<rect x="1252" y="900" width="1" height="3" fill="#a80000"/>
<rect x="1260" y="900" width="1" height="3" fill="#a80000"/>
<rect x="1267" y="900" width="1" height="3" fill="#a80000"/>
<rect x="1282" y="900" width="1" height="3" fill="#a80000"/>
<rect x="1290" y="900" width="1" height="3" fill="#a80000"/>
<rect x="1297" y="900" width="1" height="3" fill="#a80000"/>
<rect x="251" y="471" width="1" height="1" fill="#ff0000"/><rect x="250" y="472" width="3" height="1" fill="#ff0000"/><rect x="249" y="473" width="5" height="1" fill="#ff0000"/><rect x="250" y="475" width="4" height="1" fill="#ff0000"/><rect x="249" y="476" width="2" height="1" fill="#ff0000"/><rect x="253" y="476" width="2" height="1" fill="#ff0000"/><rect x="249" y="477" width="2" height="1" fill="#ff0000"/><rect x="250" y="478" width="3" height="1" fill="#ff0000"/><rect x="252" y="479" width="3" height="1" fill="#ff0000"/><rect x="249" y="480" width="1" height="1" fill="#ff0000"/><rect x="253" y="480" width="2" height="1" fill="#ff0000"/><rect x="249" y="481" width="5" height="1" fill="#ff0000"/>
<rect x="612" y="471" width="1" height="1" fill="#ff0000"/><rect x="611" y="472" width="3" height="1" fill="#ff0000"/><rect x="610" y="473" width="5" height="1" fill="#ff0000"/><rect x="611" y="475" width="4" height="1" fill="#ff0000"/><rect x="610" y="476" width="2" height="1" fill="#ff0000"/><rect x="614" y="476" width="2" height="1" fill="#ff0000"/><rect x="610" y="477" width="2" height="1" fill="#ff0000"/><rect x="611" y="478" width="3" height="1" fill="#ff0000"/><rect x="613" y="479" width="3" height="1" fill="#ff0000"/><rect x="610" y="480" width="1" height="1" fill="#ff0000"/><rect x="614" y="480" width="2" height="1" fill="#ff0000"/><rect x="610" y="481" width="5" height="1" fill="#ff0000"/>
<rect x="942" y="471" width="1" height="1" fill="#ff0000"/><rect x="941" y="472" width="3" height="1" fill="#ff0000"/><rect x="940" y="473" width="5" height="1" fill="#ff0000"/><rect x="941" y="475" width="4" height="1" fill="#ff0000"/><rect x="940" y="476" width="2" height="1" fill="#ff0000"/><rect x="944" y="476" width="2" height="1" fill="#ff0000"/><rect x="940" y="477" width="2" height="1" fill="#ff0000"/><rect x="941" y="478" width="3" height="1" fill="#ff0000"/><rect x="943" y="479" width="3" height="1" fill="#ff0000"/><rect x="940" y="480" width="1" height="1" fill="#ff0000"/><rect x="944" y="480" width="2" height="1" fill="#ff0000"/><rect x="940" y="481" width="5" height="1" fill="#ff0000"/>
<polyline points="104,463 108,461 M" fill="none"/>
<path d="M103.5,463.5 L115,463.5 M103.5,463.5 L106.5,461 M103.5,463.5 L106.5,466.5" stroke="#d8d8d8" stroke-width="1" fill="none"/>
<path d="M554.5,41 L565.5,44.5 M554.5,41 L557.5,39.5 M554.5,41 L556.5,44.5" stroke="#d8d8d8" stroke-width="1" fill="none"/>
<path d="M1386.5,22.5 L1391.5,27.5 L1386.5,32.5 L1381.5,27.5 Z" fill="none" stroke="#8c8c8c" stroke-width="1" shape-rendering="auto"/>
<rect x="1399.5" y="22.5" width="11" height="10" rx="2" fill="none" stroke="#8a8a8a" stroke-width="1"/>
<rect x="1406" y="24" width="2.5" height="7" fill="#8a8a8a"/>
<path d="M450.8,2.5 L454.8,7.5 L450.8,12.5" stroke="#d0d0d0" stroke-width="1.1" fill="none" shape-rendering="auto"/>
<circle cx="137" cy="27" r="5.8" fill="#7a7a7a" shape-rendering="auto"/><path d="M134.2,25.6 L137,28.4 L139.8,25.6" stroke="#222" stroke-width="1" fill="none" shape-rendering="auto"/>
<circle cx="8.7" cy="492" r="5.8" fill="#7a7a7a" shape-rendering="auto"/><path d="M5.9,490.6 L8.7,493.4 L11.5,490.6" stroke="#222" stroke-width="1" fill="none" shape-rendering="auto"/>
<path d="M0.5,1.5 L4.5,5.5 L0.5,9.5 M3.5,1.5 L7.5,5.5 L3.5,9.5" stroke="#a8a8a8" stroke-width="1.2" fill="none" shape-rendering="auto"/>
<rect x="5.5" y="1.5" width="11" height="10" rx="2" fill="none" stroke="#6a6a6a" stroke-width="1"/>
<rect x="12" y="3" width="2.5" height="7" fill="#7a7a7a"/>
</svg>
<div class="t" style="left:28px;top:-1px;color:#e6e6e6;font-size:12px;">分时</div><div class="t" style="left:62px;top:-1px;color:#e6e6e6;font-size:12px;">1分钟</div><div class="t" style="left:100px;top:-1px;color:#e6e6e6;font-size:12px;">5分钟</div><div class="t" style="left:139px;top:-1px;color:#e6e6e6;font-size:12px;">15分钟</div><div class="t" style="left:185px;top:-1px;color:#e6e6e6;font-size:12px;">30分钟</div><div class="t" style="left:231px;top:-1px;color:#e6e6e6;font-size:12px;">60分钟</div><div class="t" style="left:278px;top:-1px;color:#e6e6e6;font-size:12px;">日线</div><div class="t" style="left:311px;top:-1px;color:#e6e6e6;font-size:12px;">周线</div><div class="t" style="left:346px;top:-1px;color:#ff4a4a;font-size:12px;">月线</div><div class="t" style="left:378px;top:-1px;color:#e6e6e6;font-size:12px;">多周期</div><div class="t" style="left:421px;top:-1px;color:#e6e6e6;font-size:12px;">更多</div><div class="t" style="left:3px;top:19px;color:#e6e6e6;font-size:12px;letter-spacing:0.2px">远达环保(月线.前复权)</div><div class="t" style="left:147px;top:19px;color:#e6e6e6;font-size:12px;">默认主图</div><div class="t" style="left:200px;top:19px;color:#ffffff;font-size:12px;letter-spacing:0.35px">MA5: 5.83</div><div class="t" style="left:263px;top:19px;color:#ff0000;font-size:12px;letter-spacing:0.5px">MA10: 5.79</div><div class="t" style="left:333px;top:19px;color:#ffff00;font-size:12px;letter-spacing:0.4px">MA20: 6.29</div><div class="t" style="left:403px;top:19px;color:#0000ff;font-size:12px;letter-spacing:0.4px">MA60: 6.18</div><div class="t" style="left:568px;top:39px;color:#d8d8d8;font-size:12px;">11.45</div><div class="t" style="left:116px;top:456px;color:#d8d8d8;font-size:12px;">4.45</div><div class="t" style="left:19px;top:484px;color:#e6e6e6;font-size:12px;">资金筹码动态</div><div class="t" style="left:96px;top:484px;color:#e6e6e6;font-size:12px;">资金一: 12.89</div><div class="t" style="left:175px;top:484px;color:#ffff00;font-size:12px;">资金二: 51.48</div><div class="t" style="left:254px;top:484px;color:#ff00ff;font-size:12px;">资金三: 17.62</div><div class="t" style="left:333px;top:484px;color:#00ff00;font-size:12px;">资金四: 6.77</div><div class="t" style="left:405px;top:484px;color:#d0d0d0;font-size:12px;">资金五: 2.67</div><div class="t" style="left:477px;top:484px;color:#0000ff;font-size:12px;">资金六: 2.36</div><div class="t" style="left:549px;top:484px;color:#ffffff;font-size:12px;">资金七: 2.32</div><div class="t" style="left:621px;top:484px;color:#ffff00;font-size:12px;">资金八: 2.65</div><div class="t" style="left:693px;top:484px;color:#ff00ff;font-size:12px;">资金九: 0.91</div><div class="t" style="left:764px;top:484px;color:#ff0000;font-size:12px;">资金十: 0.13</div><div class="t" style="left:836px;top:484px;color:#00ff00;font-size:12px;">浮筹: 73.41</div>
<div class="ra" style="top:29px">11.50</div><div class="ra" style="top:59px">11.00</div><div class="ra" style="top:89px">10.50</div><div class="ra" style="top:120px">10.00</div><div class="ra" style="top:150px">9.50</div><div class="ra" style="top:180px">9.00</div><div class="ra" style="top:210px">8.50</div><div class="ra" style="top:240px">8.00</div><div class="ra" style="top:270px">7.50</div><div class="ra" style="top:301px">7.00</div><div class="ra" style="top:331px">6.50</div><div class="ra" style="top:361px">6.00</div><div class="ra" style="top:391px">5.50</div><div class="ra" style="top:421px">5.00</div><div class="ra" style="top:452px">4.50</div><div class="ra" style="top:498px">60.00</div><div class="ra" style="top:538px">50.00</div><div class="ra" style="top:578px">40.00</div><div class="ra" style="top:618px">30.00</div><div class="ra" style="top:658px">20.00</div><div class="ra" style="top:698px">10.00</div><div class="ra" style="top:738px">0.00</div><div class="ra" style="top:779px">-10.00</div><div class="ra" style="top:819px">-20.00</div>
<div class="bl" style="left:13px">2019年</div><div class="bl" style="left:43px">12</div><div class="bl" style="left:73px">1</div><div class="bl" style="left:103px">2</div><div class="bl" style="left:133px">3</div><div class="bl" style="left:253px">7</div><div class="bl" style="left:283px">8</div><div class="bl" style="left:313px">9</div><div class="bl" style="left:343px">10</div><div class="bl" style="left:373px">11</div><div class="bl" style="left:403px">12</div><div class="bl" style="left:433px">1</div><div class="bl" style="left:463px">2</div><div class="bl" style="left:494px">3</div><div class="bl" style="left:524px">4</div><div class="bl" style="left:554px">5</div><div class="bl" style="left:584px">6</div><div class="bl" style="left:614px">7</div><div class="bl" style="left:644px">8</div><div class="bl" style="left:674px">9</div><div class="bl" style="left:704px">10</div><div class="bl" style="left:734px">11</div><div class="bl" style="left:764px">12</div><div class="bl" style="left:794px">1</div><div class="bl" style="left:824px">2</div><div class="bl" style="left:854px">3</div><div class="bl" style="left:884px">4</div><div class="bl" style="left:914px">5</div><div class="bl" style="left:944px">6</div><div class="bl" style="left:974px">7</div><div class="bl" style="left:1004px">8</div><div class="bl" style="left:1034px">9</div><div class="bl" style="left:1064px">10</div><div class="bl" style="left:1094px">11</div><div class="bl" style="left:1125px">12</div><div class="bl" style="left:1155px">1</div><div class="bl" style="left:1185px">2</div><div class="bl" style="left:1215px">3</div><div class="bl" style="left:1245px">4</div><div class="bl" style="left:1275px">5</div><div class="bl" style="left:1305px">6</div><div class="hl">2020/04/30/四</div><div class="bl" style="left:1427px;color:#e6e6e6">月线</div>
</body></html>
